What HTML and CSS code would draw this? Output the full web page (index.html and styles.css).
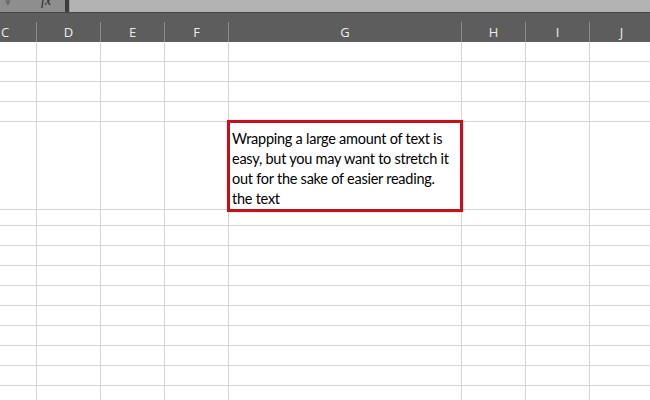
FILE: index.html
```html
<!DOCTYPE html>
<html lang="en">
<head>
    <meta charset="UTF-8">
    <title>Wrap Text</title>
    <link rel="stylesheet" href="styles.css">
</head>
<body>

<div class="sheet">
    <div class="formula-bar">
        <div class="name-box">
            <span class="arrow">&#9662;</span>
            <span class="fx">fx</span>
        </div>
        <div class="bar-split"></div>
        <div class="formula-input"></div>
    </div>

    <div class="col-heads">
        <div class="head first">C</div>
        <div class="head">D</div>
        <div class="head">E</div>
        <div class="head">F</div>
        <div class="head">G</div>
        <div class="head">H</div>
        <div class="head">I</div>
        <div class="head">J</div>
    </div>

    <div class="grid" id="grid"></div>
</div>

<script>
    document.addEventListener('DOMContentLoaded', function () {
        const grid = document.getElementById('grid');
        const rowCount = 16;
        const tallRow = 4;

        for (let r = 0; r < rowCount; r++) {
            const row = document.createElement('div');
            row.className = r === tallRow ? 'row tall' : 'row';
            for (let c = 0; c < 8; c++) {
                const cell = document.createElement('div');
                cell.className = 'cell';
                if (r === tallRow && c === 4) {
                    cell.classList.add('wrapped');
                    cell.innerHTML = `
                        <div class="cell-text">Wrapping a large amount of text is<br>easy, but you may want to stretch it<br>out for the sake of easier reading.<br>the text</div>
                        <div class="highlight"></div>
                    `;
                }
                row.appendChild(cell);
            }
            grid.appendChild(row);
        }
    });
</script>

</body>
</html>
```

FILE: styles.css
```css
body {
    margin: 0;
    padding: 0;
    background-color: #fff;
    font-family: "Open Sans", Arial, sans-serif;
}

.sheet {
    width: 650px;
    height: 400px;
    overflow: hidden;
}

.formula-bar {
    display: flex;
    height: 12px;
    border-bottom: 1px solid #454545;
    overflow: hidden;
}

.name-box {
    width: 65px;
    background-color: #8e8e8e;
    position: relative;
}

.name-box .arrow {
    position: absolute;
    left: 5px;
    top: -4px;
    font-size: 11px;
    line-height: 12px;
    color: #6a6a6a;
}

.name-box .fx {
    position: absolute;
    left: 41px;
    top: -6px;
    font-family: "Liberation Serif", serif;
    font-style: italic;
    font-size: 14px;
    line-height: 14px;
    color: #2a2a2a;
}

.bar-split {
    width: 4px;
    background-color: #3e3e3e;
}

.formula-input {
    flex: 1;
    background-color: #b3b3b3;
    border-left: 1px solid #9a9a9a;
}

.col-heads {
    display: grid;
    grid-template-columns: 37px 64px 64px 64px 233px 64px 64px 64px;
    height: 29px;
    padding-top: 9px;
    box-sizing: border-box;
    background-color: #5d5d5d;
}

.head {
    display: flex;
    justify-content: center;
    align-items: center;
    border-right: 1px solid #8c8c8c;
    color: #ececec;
    font-size: 13px;
}

.head.first {
    justify-content: flex-start;
    padding-left: 1px;
}

.row {
    display: grid;
    grid-template-columns: 37px 64px 64px 64px 233px 64px 64px 64px;
    height: 20px;
}

.row.tall {
    height: 84px;
}

.cell {
    border-right: 1px solid #d6d6d6;
    border-bottom: 1px solid #d6d6d6;
    position: relative;
}

.cell.wrapped {
    z-index: 1;
}

.cell-text {
    padding: 7px 0 0 3px;
    font-family: Lato, "Open Sans", sans-serif;
    font-size: 14.5px;
    line-height: 20px;
    letter-spacing: -0.25px;
    color: #000;
    white-space: nowrap;
}

.highlight {
    position: absolute;
    top: -2px;
    left: -2px;
    right: -2px;
    bottom: -3px;
    border: 3px solid #c4121c;
    box-shadow: 0 0 1px rgba(196, 18, 28, 0.5);
}
```
